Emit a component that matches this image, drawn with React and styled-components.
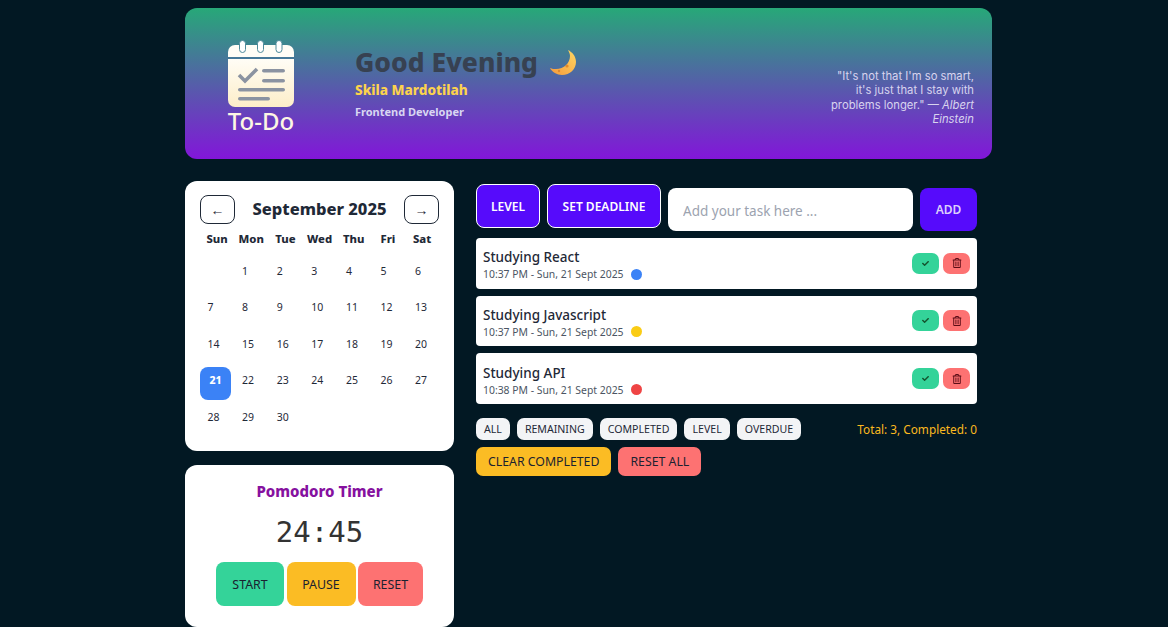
import { useState } from "react";
import styled, { createGlobalStyle } from "styled-components";
import { FaRegTrashAlt, FaCheck } from "react-icons/fa";

const GlobalStyle = createGlobalStyle`
  html, body {
    margin: 0;
    padding: 0;
    height: 627px;
    overflow: hidden;
    background: #021823;
    font-family: "Noto Sans", "Open Sans", sans-serif;
  }
`;

const Page = styled.div`
  width: 807px;
  margin-left: 185px;
  padding-top: 8px;
`;

const Header = styled.header`
  height: 151px;
  border-radius: 12px;
  background: linear-gradient(180deg, #27a878 0%, #8216d9 100%);
  display: flex;
  align-items: center;
  padding: 0 18px 0 43px;
`;

const Logo = styled.div`
  width: 66px;
  display: flex;
  flex-direction: column;
  align-items: center;
  margin: 6px 61px 0 0;
`;

const LogoText = styled.div`
  margin-top: 2px;
  white-space: nowrap;
  font-family: "Noto Sans", sans-serif;
  font-size: 24px;
  line-height: 24px;
  font-weight: 500;
  color: #fdf6e3;
`;

const Greeting = styled.div`
  flex: 1;
`;

const Hello = styled.h1`
  margin: 0;
  display: flex;
  align-items: center;
  gap: 12px;
  font-family: "Noto Sans", sans-serif;
  font-size: 26.5px;
  line-height: 34px;
  font-weight: 800;
  color: #374151;
`;

const Name = styled.div`
  margin-top: 1px;
  font-family: "Noto Sans", sans-serif;
  font-size: 13.6px;
  line-height: 20px;
  font-weight: 800;
  color: #fcd34d;
`;

const Role = styled.div`
  margin-top: 2px;
  font-family: "Noto Sans", sans-serif;
  font-size: 11px;
  line-height: 20px;
  font-weight: 700;
  color: #d9d6f2;
`;

const Quote = styled.p`
  margin: 28px 0 0;
  width: 150px;
  text-align: right;
  font-family: "Inter", sans-serif;
  font-size: 11.25px;
  line-height: 14.4px;
  color: #d8d4ee;

  em {
    font-style: italic;
  }
`;

const Columns = styled.div`
  display: flex;
  gap: 22px;
  margin-top: 22px;
`;

const LeftColumn = styled.div`
  width: 269px;
  display: flex;
  flex-direction: column;
  gap: 14px;
`;

const Card = styled.section`
  background: #ffffff;
  border-radius: 12px;
`;

const CalendarCard = styled(Card)`
  height: 270px;
  box-sizing: border-box;
  padding: 14px 15px 0;
`;

const MonthBar = styled.div`
  display: flex;
  align-items: center;
  justify-content: space-between;
`;

const ArrowButton = styled.button`
  width: 35px;
  height: 29px;
  box-sizing: border-box;
  padding: 0;
  border: 1px solid #1f2937;
  border-radius: 8px;
  background: #ffffff;
  color: #1f2937;
  font-family: "Noto Sans", sans-serif;
  font-size: 14px;
`;

const MonthTitle = styled.h2`
  margin: -2px 0 0;
  font-family: "Noto Sans", sans-serif;
  font-size: 16.5px;
  font-weight: 800;
  color: #1f2937;
`;

const WeekRow = styled.div`
  display: grid;
  grid-template-columns: repeat(7, 31px);
  column-gap: 3.2px;
  margin-top: 7px;
  padding-left: 1.5px;
`;

const WeekDay = styled.div`
  text-align: center;
  font-size: 11.3px;
  line-height: 16px;
  font-weight: 800;
  color: #1f2937;
`;

const DayGrid = styled.div`
  display: grid;
  grid-template-columns: repeat(7, 31px);
  grid-auto-rows: 33px;
  gap: 3.6px;
  margin-top: 10px;
`;

const Day = styled.div`
  box-sizing: border-box;
  border-radius: 8px;
  display: flex;
  align-items: center;
  justify-content: ${(p) => (p.$today ? "center" : "flex-start")};
  padding: 0 0 6px ${(p) => (p.$today ? "0" : "7.5px")};
  font-size: 10.5px;
  font-weight: ${(p) => (p.$today ? 800 : 400)};
  background: ${(p) => (p.$today ? "#3b82f6" : "transparent")};
  color: ${(p) => (p.$today ? "#ffffff" : "#1f2937")};
`;

const TimerCard = styled(Card)`
  height: 162px;
  display: flex;
  flex-direction: column;
  align-items: center;
  padding-top: 14px;
  box-sizing: border-box;
`;

const TimerTitle = styled.h3`
  margin: 0;
  font-family: "Noto Sans", sans-serif;
  font-size: 15px;
  line-height: 24px;
  font-weight: 800;
  color: #86119f;
`;

const TimerValue = styled.div`
  margin-top: 11px;
  font-family: "DejaVu Sans Mono", monospace;
  font-size: 29px;
  line-height: 36px;
  color: #333333;
`;

const TimerButtons = styled.div`
  display: flex;
  gap: 2.5px;
  margin-top: 12px;
`;

const TimerButton = styled.button`
  width: ${(p) => p.$w}px;
  height: 44px;
  padding: 0;
  border: none;
  border-radius: 8px;
  background: ${(p) => p.$bg};
  color: #1a2230;
  font-family: "Noto Sans", sans-serif;
  font-size: 12.4px;
`;

const RightColumn = styled.div`
  width: 501px;
  padding-top: 3px;
`;

const InputRow = styled.div`
  display: flex;
  height: 47px;
  gap: 7px;
`;

const PurpleButton = styled.button`
  height: ${(p) => p.$h || 44}px;
  width: ${(p) => p.$w}px;
  box-sizing: border-box;
  padding: 0;
  border: ${(p) => (p.$outlined ? "1px solid #ffffff" : "none")};
  border-radius: 8px;
  background: #560bfb;
  color: ${(p) => (p.$outlined ? "#ffffff" : "#dcd0fb")};
  font-family: "Noto Sans", sans-serif;
  font-size: 12px;
  font-weight: 600;
  align-self: ${(p) => (p.$outlined ? "flex-start" : "flex-end")};
`;

const TaskInput = styled.input`
  flex: 1;
  min-width: 0;
  height: 43px;
  align-self: flex-end;
  box-sizing: border-box;
  padding: 2px 15px 0;
  border: none;
  border-radius: 8px;
  background: #ffffff;
  font-family: "Noto Sans", sans-serif;
  font-size: 13.5px;

  &::placeholder {
    color: #9ca3af;
    opacity: 1;
  }
`;

const TaskList = styled.div`
  display: flex;
  flex-direction: column;
  gap: 7px;
  margin-top: 7px;
`;

const TaskRow = styled.div`
  height: 50.67px;
  box-sizing: border-box;
  padding: 0 7px;
  background: #ffffff;
  border-radius: 4px;
  display: flex;
  align-items: center;
  justify-content: space-between;
`;

const TaskText = styled.div`
  padding-top: 5px;
`;

const TaskTitle = styled.div`
  font-size: 13.5px;
  line-height: 17px;
  font-weight: 500;
  color: #1f2937;
`;

const TaskMeta = styled.div`
  display: flex;
  align-items: center;
  gap: 7px;
  font-size: 10.4px;
  line-height: 16px;
  color: #4b5563;
`;

const Dot = styled.span`
  width: 11px;
  height: 11px;
  border-radius: 50%;
  background: ${(p) => p.$color};
`;

const TaskActions = styled.div`
  display: flex;
  gap: 4px;
`;

const IconButton = styled.button`
  width: 27px;
  height: 21px;
  padding: 0;
  border: none;
  border-radius: 7px;
  background: ${(p) => p.$bg};
  color: ${(p) => p.$color};
  display: flex;
  align-items: center;
  justify-content: center;
`;

const FilterRow = styled.div`
  display: flex;
  align-items: center;
  gap: 7px;
  margin-top: 14px;
`;

const FilterButton = styled.button`
  height: 22px;
  padding: 0 8px;
  border: none;
  border-radius: 7px;
  background: #f3f4f6;
  color: #1f2937;
  font-family: "Noto Sans", sans-serif;
  font-size: 10.6px;
`;

const Totals = styled.div`
  margin-left: auto;
  font-size: 11.8px;
  color: #fbb81f;
`;

const ClearRow = styled.div`
  display: flex;
  gap: 7px;
  margin-top: 7px;
`;

const ClearButton = styled.button`
  height: 29px;
  padding: 0 12px;
  border: none;
  border-radius: 7px;
  background: ${(p) => p.$bg};
  color: #1a2230;
  font-family: "Noto Sans", sans-serif;
  font-size: 12.3px;
`;

const LogoIcon = () => (
  <svg width="66" height="67" viewBox="0 0 66 67">
    <defs>
      <linearGradient id="paper" x1="0" y1="0" x2="0" y2="1">
        <stop offset="0" stopColor="#fffdf6" />
        <stop offset="1" stopColor="#fdeec9" />
      </linearGradient>
    </defs>
    <path d="M7 5h52a7 7 0 0 1 7 7v5H0v-5a7 7 0 0 1 7-7z" fill="#fffdf6" />
    <path d="M0 19h66v41a7 7 0 0 1-7 7H7a7 7 0 0 1-7-7z" fill="url(#paper)" />
    <g fill="#ffffff" stroke="#4f8a9a" strokeWidth="1">
      <rect x="11.5" y="0.5" width="6" height="12" rx="3" />
      <rect x="29.5" y="0.5" width="6" height="12" rx="3" />
      <rect x="48" y="0.5" width="6" height="12" rx="3" />
    </g>
    <path d="M11 35l6 6 12-12" fill="none" stroke="#8b93a1" strokeWidth="3.6" />
    <g fill="#8b93a1">
      <rect x="34" y="29" width="23" height="3.6" rx="1.8" />
      <rect x="34" y="39" width="23" height="3.6" rx="1.8" />
      <rect x="10" y="48" width="47" height="3.6" rx="1.8" />
      <rect x="10" y="57" width="32" height="3.6" rx="1.8" />
    </g>
  </svg>
);

const MoonIcon = () => (
  <svg width="26" height="25" viewBox="0 0 26 25">
    <defs>
      <linearGradient id="moon" x1="1" y1="0" x2="0" y2="1">
        <stop offset="0" stopColor="#fdd663" />
        <stop offset="1" stopColor="#f79a3a" />
      </linearGradient>
    </defs>
    <path d="M18 0c4 2 8 6 8 12 0 7-6 13-14 13-5 0-10-3-12-7 2 1 4 1 6 1 8 0 14-6 14-13 0-2-1-4-2-6z" fill="url(#moon)" />
    <circle cx="17" cy="16" r="1.6" fill="#e08a2e" />
    <circle cx="9" cy="21" r="1.2" fill="#e08a2e" />
  </svg>
);

const weekDays = ["Sun", "Mon", "Tue", "Wed", "Thu", "Fri", "Sat"];

const tasks = [
  { id: 1, title: "Studying React", time: "10:37 PM - Sun, 21 Sept 2025", color: "#3b82f6" },
  { id: 2, title: "Studying Javascript", time: "10:37 PM - Sun, 21 Sept 2025", color: "#facc15" },
  { id: 3, title: "Studying API", time: "10:38 PM - Sun, 21 Sept 2025", color: "#ef4444" },
];

const filters = ["ALL", "REMAINING", "COMPLETED", "LEVEL", "OVERDUE"];

const App = () => {
  const [task, setTask] = useState("");
  const blanks = [null];
  const days = [...blanks, ...Array.from({ length: 30 }, (_, i) => i + 1)];

  return (
    <>
      <GlobalStyle />
      <Page>
        <Header>
          <Logo>
            <LogoIcon />
            <LogoText>To-Do</LogoText>
          </Logo>
          <Greeting>
            <Hello>
              Good Evening <MoonIcon />
            </Hello>
            <Name>Skila Mardotilah</Name>
            <Role>Frontend Developer</Role>
          </Greeting>
          <Quote>
            "It's not that I'm so smart, it's just that I stay with problems longer." <em>— Albert Einstein</em>
          </Quote>
        </Header>
        <Columns>
          <LeftColumn>
            <CalendarCard>
              <MonthBar>
                <ArrowButton>←</ArrowButton>
                <MonthTitle>September 2025</MonthTitle>
                <ArrowButton>→</ArrowButton>
              </MonthBar>
              <WeekRow>
                {weekDays.map((d) => (
                  <WeekDay key={d}>{d}</WeekDay>
                ))}
              </WeekRow>
              <DayGrid>
                {days.map((d, i) => (
                  <Day key={i} $today={d === 21}>
                    {d}
                  </Day>
                ))}
              </DayGrid>
            </CalendarCard>
            <TimerCard>
              <TimerTitle>Pomodoro Timer</TimerTitle>
              <TimerValue>24:45</TimerValue>
              <TimerButtons>
                <TimerButton $w={68} $bg="#34d399">START</TimerButton>
                <TimerButton $w={69} $bg="#fbbc24">PAUSE</TimerButton>
                <TimerButton $w={65} $bg="#fd7272">RESET</TimerButton>
              </TimerButtons>
            </TimerCard>
          </LeftColumn>
          <RightColumn>
            <InputRow>
              <PurpleButton $outlined $w={64}>LEVEL</PurpleButton>
              <PurpleButton $outlined $w={114}>SET DEADLINE</PurpleButton>
              <TaskInput
                placeholder="Add your task here ..."
                value={task}
                onChange={(e) => setTask(e.target.value)}
              />
              <PurpleButton $w={57} $h={43}>ADD</PurpleButton>
            </InputRow>
            <TaskList>
              {tasks.map((t) => (
                <TaskRow key={t.id}>
                  <TaskText>
                    <TaskTitle>{t.title}</TaskTitle>
                    <TaskMeta>
                      {t.time}
                      <Dot $color={t.color} />
                    </TaskMeta>
                  </TaskText>
                  <TaskActions>
                    <IconButton $bg="#34d399" $color="#14532d">
                      <FaCheck size={7} />
                    </IconButton>
                    <IconButton $bg="#fd7272" $color="#5b0d16">
                      <FaRegTrashAlt size={10} />
                    </IconButton>
                  </TaskActions>
                </TaskRow>
              ))}
            </TaskList>
            <FilterRow>
              {filters.map((f) => (
                <FilterButton key={f}>{f}</FilterButton>
              ))}
              <Totals>Total: 3, Completed: 0</Totals>
            </FilterRow>
            <ClearRow>
              <ClearButton $bg="#fbbc24">CLEAR COMPLETED</ClearButton>
              <ClearButton $bg="#fd7272">RESET ALL</ClearButton>
            </ClearRow>
          </RightColumn>
        </Columns>
      </Page>
    </>
  );
};

export default App;
